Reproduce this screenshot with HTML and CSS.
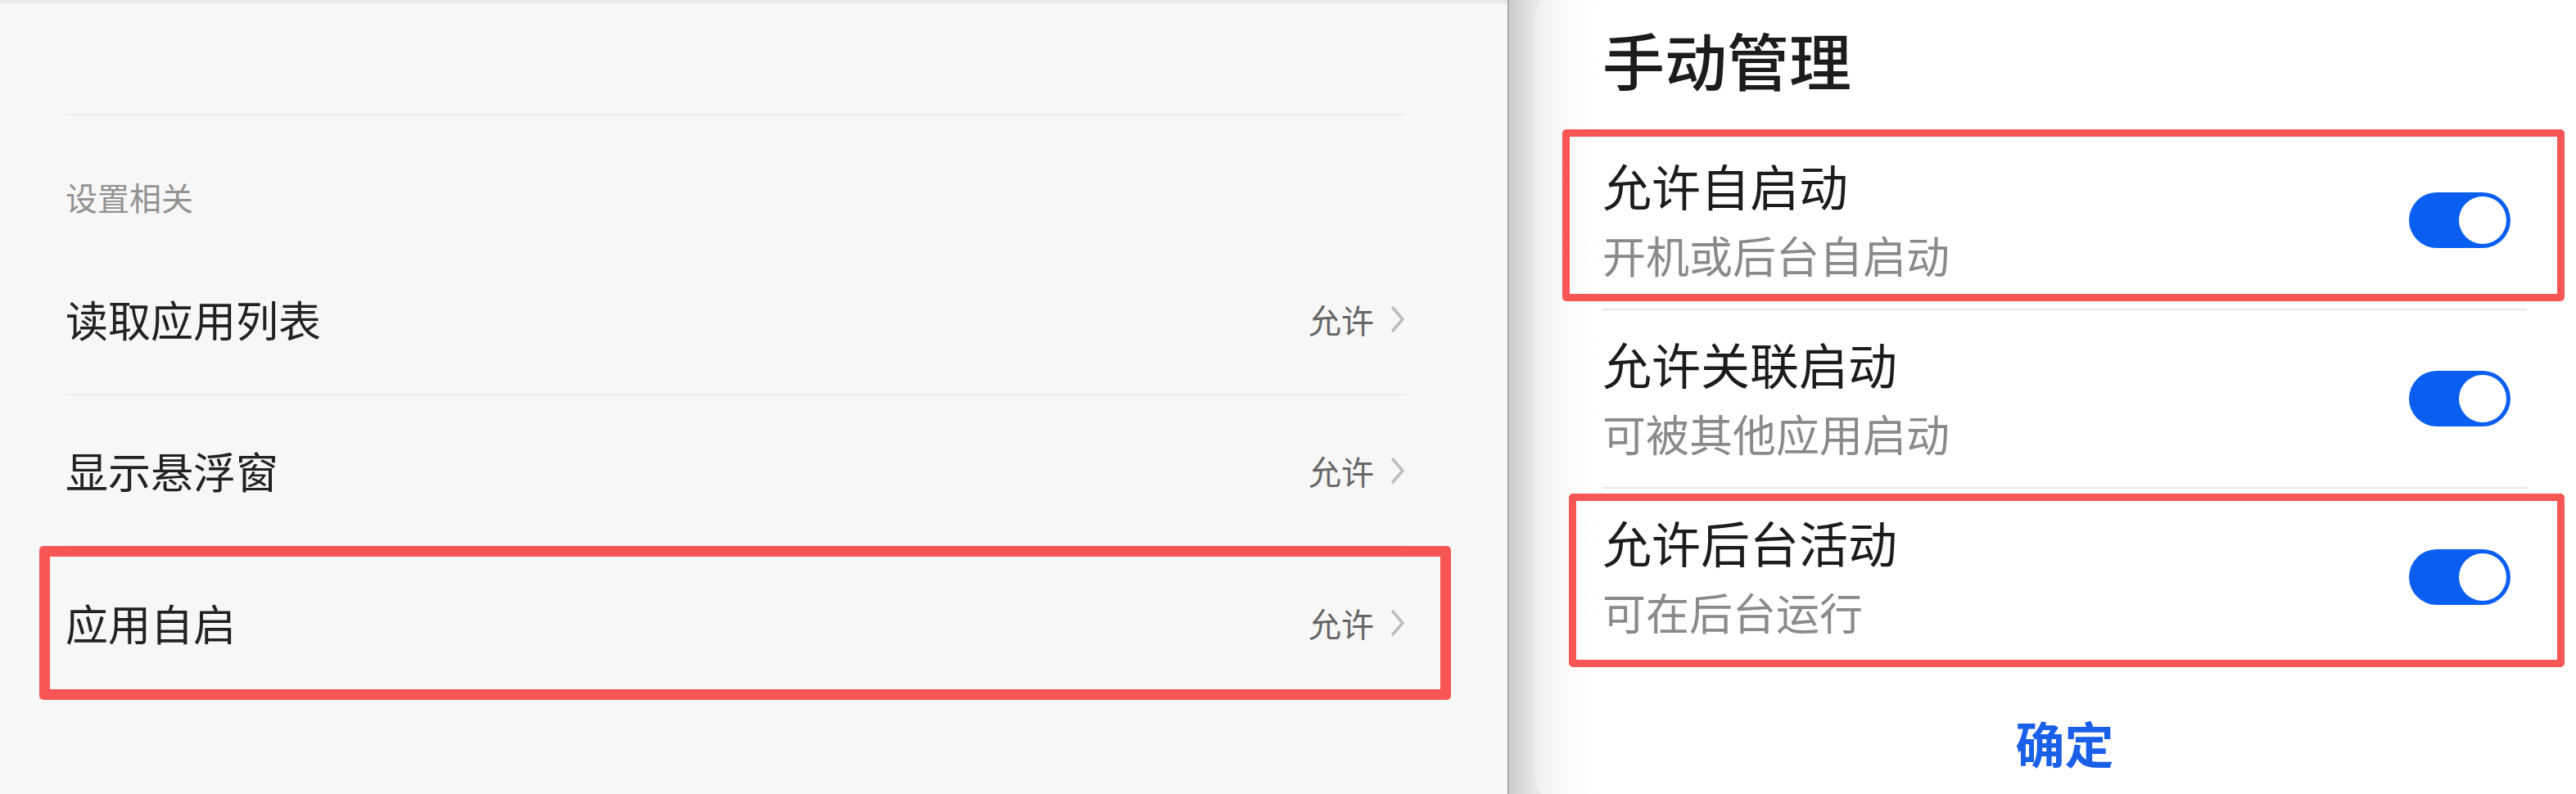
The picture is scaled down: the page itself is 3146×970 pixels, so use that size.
FILE: index.html
```html
<!DOCTYPE html>
<html lang="zh-CN">
<head>
<meta charset="utf-8">
<title>应用自启</title>
<link rel="stylesheet" href="styles.css">
</head>
<body>
<div class="screen">
  <section class="left">
    <div class="left-top"></div>
    <div class="section-head">设置相关</div>
    <div class="perm-row">
      <span class="perm-name">读取应用列表</span>
      <span class="perm-value">允许<svg class="chev" viewBox="0 0 18 34" width="18" height="34"><path d="M3 3 L15 17 L3 31" fill="none" stroke="#bdbdbd" stroke-width="3.5" stroke-linecap="round" stroke-linejoin="round"/></svg></span>
    </div>
    <div class="perm-row">
      <span class="perm-name">显示悬浮窗</span>
      <span class="perm-value">允许<svg class="chev" viewBox="0 0 18 34" width="18" height="34"><path d="M3 3 L15 17 L3 31" fill="none" stroke="#bdbdbd" stroke-width="3.5" stroke-linecap="round" stroke-linejoin="round"/></svg></span>
    </div>
    <div class="perm-row perm-row-last">
      <span class="perm-name">应用自启</span>
      <span class="perm-value">允许<svg class="chev" viewBox="0 0 18 34" width="18" height="34"><path d="M3 3 L15 17 L3 31" fill="none" stroke="#bdbdbd" stroke-width="3.5" stroke-linecap="round" stroke-linejoin="round"/></svg></span>
      <div class="mark mark-left"></div>
    </div>
  </section>
  <section class="right">
    <div class="card">
      <div class="card-title">手动管理</div>
      <div class="opt-row">
        <div class="opt-text">
          <div class="opt-name">允许自启动</div>
          <div class="opt-desc">开机或后台自启动</div>
        </div>
        <div class="toggle"><span class="knob"></span></div>
        <div class="mark mark-r1"></div>
      </div>
      <div class="opt-row">
        <div class="opt-text">
          <div class="opt-name">允许关联启动</div>
          <div class="opt-desc">可被其他应用启动</div>
        </div>
        <div class="toggle"><span class="knob"></span></div>
      </div>
      <div class="opt-row opt-row-last">
        <div class="opt-text">
          <div class="opt-name">允许后台活动</div>
          <div class="opt-desc">可在后台运行</div>
        </div>
        <div class="toggle"><span class="knob"></span></div>
        <div class="mark mark-r3"></div>
      </div>
      <div class="confirm">确定</div>
    </div>
  </section>
</div>
</body>
</html>
```

FILE: styles.css
```css
* { box-sizing: border-box; margin: 0; padding: 0; }

html, body {
  width: 3146px;
  height: 970px;
  overflow: hidden;
  background: #f7f7f7;
  font-family: "Noto Sans CJK SC", "Noto Sans", sans-serif;
}

.screen {
  display: flex;
  width: 3146px;
  height: 970px;
}

/* ---------- left panel ---------- */
.left {
  width: 1841px;
  flex: none;
  height: 970px;
  background: #f7f7f7;
  border-top: 4px solid #e8e8e8;
  padding: 0 125px 0 80px;
}

.left-top {
  height: 137px;
  border-bottom: 2px solid #ececec;
}

.section-head {
  height: 157px;
  padding-top: 75px;
  font-size: 39px;
  line-height: 48px;
  color: #929292;
}

.perm-row {
  position: relative;
  display: flex;
  align-items: center;
  justify-content: space-between;
  height: 185px;
  border-bottom: 2px solid #ececec;
}

.perm-row-last {
  border-bottom: none;
}

.perm-name {
  font-size: 52px;
  line-height: 70px;
  color: #222;
}

.perm-value {
  display: flex;
  align-items: center;
  gap: 20px;
  font-size: 40px;
  line-height: 50px;
  color: #666;
}

.chev {
  display: block;
}

.mark {
  position: absolute;
  border: 13px solid #f85555;
  border-radius: 5px;
  pointer-events: none;
}

.mark-left {
  left: -32px;
  right: -56px;
  top: -1px;
  bottom: -2px;
}

/* ---------- right side ---------- */
.right {
  flex: 1;
  height: 970px;
  border-left: 2px solid #a9a9a9;
  background: linear-gradient(90deg, #cbcbcb, #e7e7e7 31px, #e7e7e7);
  padding-left: 31px;
}

.card {
  height: 1010px;
  margin-top: -20px;
  border-radius: 46px 0 0 46px;
  background: linear-gradient(90deg, #efefef, #fbfbfb 40px, #ffffff 80px);
  padding: 20px 60px 0 83px;
  display: flex;
  flex-direction: column;
}

.card-title {
  height: 161px;
  padding-top: 20px;
  font-size: 76px;
  line-height: 104px;
  font-weight: 500;
  color: #1c1c1c;
}

.opt-row {
  position: relative;
  display: flex;
  align-items: center;
  justify-content: space-between;
  height: 218px;
  border-bottom: 2px solid #e6e6e6;
}

.opt-row-last {
  height: 216px;
  border-bottom: none;
}

.opt-text {
  margin-top: 4px;
}

.opt-name {
  font-size: 60px;
  line-height: 80px;
  color: #1c1c1c;
}

.opt-desc {
  font-size: 53px;
  line-height: 90px;
  color: #8a8a8a;
}

.toggle {
  position: relative;
  width: 124px;
  height: 68px;
  margin-right: 20px;
  border-radius: 34px;
  background: #0b5ff0;
  flex: none;
}

.knob {
  position: absolute;
  right: 5px;
  top: 5px;
  width: 58px;
  height: 58px;
  border-radius: 50%;
  background: #fff;
}

.mark-r1 {
  border-width: 9px;
  left: -49px;
  right: -46px;
  top: -3px;
  bottom: 9px;
}

.mark-r3 {
  border-width: 9px;
  left: -41px;
  right: -46px;
  top: 6px;
  bottom: -2px;
}

.confirm {
  margin-top: 54px;
  text-align: center;
  font-size: 60px;
  line-height: 80px;
  font-weight: 700;
  color: #1a5fe8;
}
```
